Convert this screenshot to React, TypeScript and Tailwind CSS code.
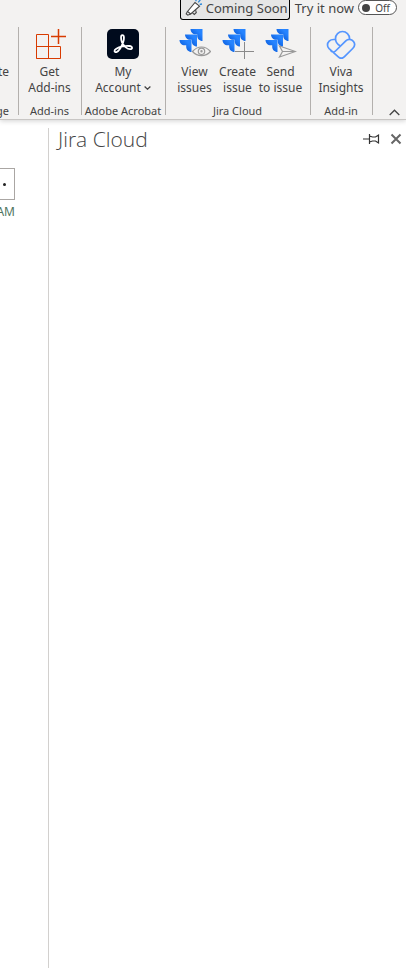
import type { ReactNode } from "react";

export default function App() {
  return (
    <div className="flex min-h-screen flex-col bg-white font-['Noto_Sans','Open_Sans',sans-serif] text-xs text-[#444444]">
      <header className="border-b border-[#c8c6c4] bg-[#f3f2f1] shadow-[0_1px_5px_rgba(0,0,0,0.18)]">
        <TopBar />
        <Ribbon />
      </header>
      <div className="flex flex-1">
        <MessageEdge />
        <JiraPane />
      </div>
    </div>
  );
}

function TopBar() {
  return (
    <div className="flex h-5 items-start justify-end pr-[9px]">
      <button
        type="button"
        className="flex h-5 w-[110px] shrink-0 items-center gap-[3px] rounded-b-[3px] border border-t-0 border-black bg-[#e6e6e6] pb-[3px] pl-1 text-[13px] leading-4 whitespace-nowrap"
      >
        <MegaphoneIcon />
        Coming Soon
      </button>
      <label htmlFor="try-now" className="ml-[5px] text-[13px] leading-4 whitespace-nowrap">
        Try it now
      </label>
      <button
        id="try-now"
        type="button"
        role="switch"
        aria-checked="false"
        className="ml-1 flex h-[15px] w-[39px] shrink-0 items-center justify-between rounded-full border border-[#555555] bg-white pr-1.5 pl-[3px] text-[10px] leading-3"
      >
        <span className="size-2 rounded-full bg-[#444444]" />
        Off
      </button>
    </div>
  );
}

function Ribbon() {
  return (
    <nav className="flex h-[99px] items-start pt-[7px]">
      <Group className="w-[19px]" label="ge" clipped>
        <span className="mt-[37px] leading-4">te</span>
      </Group>
      <Group className="w-[63px]" label="Add-ins">
        <RibbonButton icon={<AddInsIcon />} lines={["Get", "Add-ins"]} />
      </Group>
      <Group className="w-[84px]" label="Adobe Acrobat">
        <RibbonButton icon={<AcrobatIcon />} lines={["My", "Account"]} menu />
      </Group>
      <Group className="w-[145px]" label="Jira Cloud">
        <RibbonButton icon={<JiraIcon kind="view" />} lines={["View", "issues"]} />
        <RibbonButton icon={<JiraIcon kind="create" />} lines={["Create", "issue"]} />
        <RibbonButton icon={<JiraIcon kind="send" />} lines={["Send", "to issue"]} />
      </Group>
      <Group className="w-[62px]" label="Add-in">
        <RibbonButton icon={<VivaIcon />} lines={["Viva", "Insights"]} />
      </Group>
      <button type="button" aria-label="Collapse ribbon" className="mr-1.5 mb-[3px] ml-auto self-end">
        <svg className="h-[7px] w-[11px]" viewBox="0 0 11 7" fill="none" stroke="#444444" strokeWidth="1.3">
          <path d="M.7 6 5.5 1.2 10.3 6" />
        </svg>
      </button>
    </nav>
  );
}

function Group({
  label,
  className,
  clipped,
  children,
}: {
  label: string;
  className: string;
  clipped?: boolean;
  children: ReactNode;
}) {
  return (
    <section className={`flex shrink-0 items-start ${className}`}>
      <div
        className={`flex h-[92px] min-w-0 flex-1 flex-col ${
          clipped ? "items-end pr-[9px]" : "items-center pr-px"
        }`}
      >
        <div className="flex flex-1 items-start">{children}</div>
        <p className="text-[11px] leading-4 whitespace-nowrap">{label}</p>
      </div>
      <div className="h-[88px] w-px bg-[#b3b0ad]" />
    </section>
  );
}

function RibbonButton({ icon, lines, menu }: { icon: ReactNode; lines: [string, string]; menu?: boolean }) {
  return (
    <button
      type="button"
      className={`flex flex-col items-center whitespace-nowrap ${menu ? "w-14" : "w-[43px]"}`}
    >
      {icon}
      <span className="mt-[5px] leading-4">{lines[0]}</span>
      <span className="flex items-center gap-[3px] leading-4">
        {lines[1]}
        {menu ? (
          <svg className="h-1 w-[7px]" viewBox="0 0 7 4" fill="none" stroke="#444444" strokeWidth="1.3">
            <path d="M.6.5 3.5 3.2 6.4.5" />
          </svg>
        ) : null}
      </span>
    </button>
  );
}

function MessageEdge() {
  return (
    <aside className="mt-2 w-[49px] shrink-0 border-r border-[#d2d0ce] pt-10">
      <button
        type="button"
        aria-label="More actions"
        className="flex h-8 w-[15px] items-center justify-end border border-l-0 border-[#aaa6a3] pr-2"
      >
        <span className="size-[3px] rounded-full bg-[#222222]" />
      </button>
      <div className="flex w-[15px] justify-end">
        <span className="mt-1 leading-4 text-[#4f7560]">AM</span>
      </div>
    </aside>
  );
}

function JiraPane() {
  return (
    <main className="flex flex-1 items-start justify-between pt-[5px] pr-1 pl-[9px]">
      <h1 className="font-['Open_Sans','Noto_Sans',sans-serif] text-[21px] leading-7 font-light text-[#444444]">
        Jira Cloud
      </h1>
      <div className="mt-2 flex items-center gap-2.5">
        <button type="button" aria-label="Pin">
          <svg className="h-3 w-[17px]" viewBox="0 0 17 12" fill="none" stroke="#333333" strokeWidth="1.2">
            <path d="M0 6h6M6.5 1v10M6.5 3l3 1h3l3-2v8l-3-2h-3l-3 1" />
          </svg>
        </button>
        <button type="button" aria-label="Close pane">
          <svg className="size-3" viewBox="0 0 12 12" fill="none" stroke="#666666" strokeWidth="2">
            <path d="M1.5 1.5l9 9M10.5 1.5l-9 9" />
          </svg>
        </button>
      </div>
    </main>
  );
}

function MegaphoneIcon() {
  return (
    <svg className="size-[18px] shrink-0" viewBox="0 0 18 18" fill="none" stroke="#444444" strokeWidth="1.1">
      <path fill="#ffffff" d="M2.5 12.5 10 3.5l4.5 3.7L5.7 15z" />
      <path d="M2.5 12.5 1.2 14.8l1.6 1.4L5.7 15M7.5 13.8l1.8 1.6 2-1.9-.7-2.4" />
      <path stroke="#2b88d8" strokeWidth="1.3" d="M11 2.2V.5M13.2 3.4 15.3.8M14.7 5.5l2.3-.5" />
    </svg>
  );
}

function AddInsIcon() {
  return (
    <svg className="size-8" viewBox="0 0 32 32" fill="none" stroke="#d83b01">
      <path d="M2.5 7.5h12v24h-12zM2.5 19.5h24v12h-24" />
      <path strokeWidth="1.5" d="M24.5 2v15M17 9.5h15" />
    </svg>
  );
}

function AcrobatIcon() {
  return (
    <svg className="size-8" viewBox="0 0 32 32" fill="none">
      <rect y="2" width="32" height="30" rx="5" fill="#000b1d" />
      <path
        stroke="#ffffff"
        strokeWidth="1.8"
        strokeLinejoin="round"
        d="M15.3 8.2c2.2 0 1.900 3.800.8 7.200-1.400 4.300-4.500 9.200-6.700 9.700-2.200.4-2.800-1.700-.1-3.400 3-1.900 9.200-3.200 13-2.700 3.800.5 3.300 3.200.9 3.200-2.900.1-6.700-3.300-8.200-6.900-1.300-3-1.400-7.100.3-7.100z"
      />
    </svg>
  );
}

function JiraIcon({ kind }: { kind: "view" | "create" | "send" }) {
  return (
    <svg className="size-8" viewBox="0 0 32 32" fill="none">
      <defs>
        <linearGradient id={`jira-${kind}`} x1="1" y1="0" x2=".35" y2=".65">
          <stop offset=".4" stopColor="#2684ff" />
          <stop offset="1" stopColor="#0f62e0" />
        </linearGradient>
      </defs>
      <g fill={`url(#jira-${kind})`}>
        <path d="M11.5 2h12v12c-3 0-5.300-2.500-5.300-5.300V7.300h-1.400c-3 0-5.300-2.300-5.300-5.300z" />
        <path d="M6 7.500h12v12c-3 0-5.300-2.500-5.300-5.300v-1.400h-1.400c-3 0-5.300-2.300-5.300-5.300z" />
        <path d="M.5 13h12v12c-3 0-5.300-2.500-5.300-5.300v-1.400H5.800C2.800 18.300.5 16 .5 13z" />
      </g>
      {kind === "view" ? (
        <g stroke="#999999" strokeWidth="1.2">
          <path fill="#f3f2f1" d="M13.5 24.500c5-6 13-6 18 0-5 5.500-13 5.500-18 0z" />
          <circle cx="22.5" cy="24.300" r="3.200" />
          <circle cx="22.5" cy="24.300" r=".6" fill="#999999" />
        </g>
      ) : null}
      {kind === "create" ? <path stroke="#8a8a8a" d="M22.5 15v17M13 24.500h19" /> : null}
      {kind === "send" ? (
        <path stroke="#999999" strokeWidth="1.2" fill="#f3f2f1" d="m14.5 19 16 5.500-16 5.500 3-5.500zM17.500 24.500h13" />
      ) : null}
    </svg>
  );
}

function VivaIcon() {
  return (
    <svg className="size-8" viewBox="0 0 32 32" fill="none" stroke="#5596ff" strokeWidth="1.7" strokeLinejoin="round">
      <path d="M15.5 19c-3-1.500-5-4-5-7.500a7 7 0 0 1 14 0v1" />
      <path d="M10.5 12.500h-2c-3.500 0-6 2.500-6 5.500 0 1.500.6 2.700 1.600 3.700L13 29.700c2 2 4.500 2 6.500 0l8.200-8.200c2.200-2.200 2.300-5 .8-7-2-2.600-5.500-2.800-7.700-.6L10.500 24c-1.500 1.500-3.500 1.500-5-.8" />
    </svg>
  );
}
